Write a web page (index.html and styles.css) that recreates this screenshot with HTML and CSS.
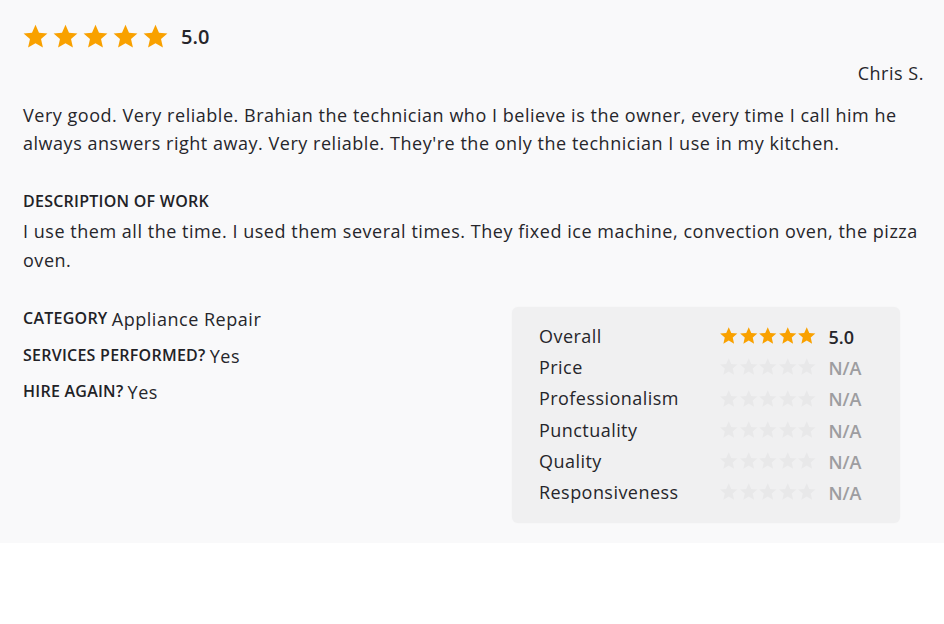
FILE: index.html
```html
<!DOCTYPE html>
<html lang="en">
<head>
<meta charset="utf-8">
<link rel="stylesheet" href="styles.css">
</head>
<body>
<svg width="0" height="0" class="defs" aria-hidden="true">
  <defs>
    <symbol id="star" viewBox="0 0 24 24">
      <path d="M12 1.6l3.1 7 7.5.7-5.7 5 1.7 7.5L12 17.9l-6.6 3.9 1.7-7.5-5.7-5 7.5-.7z"/>
    </symbol>
  </defs>
</svg>
<section class="review">
  <div class="top-rating">
    <div class="stars big">
      <svg><use href="#star"/></svg><svg><use href="#star"/></svg><svg><use href="#star"/></svg><svg><use href="#star"/></svg><svg><use href="#star"/></svg>
    </div>
    <span class="score">5.0</span>
  </div>
  <div class="author">Chris S.</div>
  <p class="text first">Very good. Very reliable. Brahian the technician who I believe is the owner, every time I call him he always answers right away. Very reliable. They're the only the technician I use in my kitchen.</p>
  <h4 class="label heading">DESCRIPTION OF WORK</h4>
  <p class="text desc">I use them all the time. I used them several times. They fixed ice machine, convection oven, the pizza oven.</p>
  <div class="details">
    <div class="facts">
      <div class="fact"><span class="label">CATEGORY</span> <span class="val">Appliance Repair</span></div>
      <div class="fact"><span class="label">SERVICES PERFORMED?</span> <span class="val">Yes</span></div>
      <div class="fact"><span class="label">HIRE AGAIN?</span> <span class="val">Yes</span></div>
    </div>
    <div class="panel">
      <div class="row"><span class="name">Overall</span><span class="stars small on"><svg><use href="#star"/></svg><svg><use href="#star"/></svg><svg><use href="#star"/></svg><svg><use href="#star"/></svg><svg><use href="#star"/></svg></span><span class="num">5.0</span></div>
      <div class="row"><span class="name">Price</span><span class="stars small off"><svg><use href="#star"/></svg><svg><use href="#star"/></svg><svg><use href="#star"/></svg><svg><use href="#star"/></svg><svg><use href="#star"/></svg></span><span class="num na">N/A</span></div>
      <div class="row"><span class="name">Professionalism</span><span class="stars small off"><svg><use href="#star"/></svg><svg><use href="#star"/></svg><svg><use href="#star"/></svg><svg><use href="#star"/></svg><svg><use href="#star"/></svg></span><span class="num na">N/A</span></div>
      <div class="row"><span class="name">Punctuality</span><span class="stars small off"><svg><use href="#star"/></svg><svg><use href="#star"/></svg><svg><use href="#star"/></svg><svg><use href="#star"/></svg><svg><use href="#star"/></svg></span><span class="num na">N/A</span></div>
      <div class="row"><span class="name">Quality</span><span class="stars small off"><svg><use href="#star"/></svg><svg><use href="#star"/></svg><svg><use href="#star"/></svg><svg><use href="#star"/></svg><svg><use href="#star"/></svg></span><span class="num na">N/A</span></div>
      <div class="row"><span class="name">Responsiveness</span><span class="stars small off"><svg><use href="#star"/></svg><svg><use href="#star"/></svg><svg><use href="#star"/></svg><svg><use href="#star"/></svg><svg><use href="#star"/></svg></span><span class="num na">N/A</span></div>
    </div>
  </div>
</section>
</body>
</html>
```
FILE: styles.css
```css
html, body { margin: 0; padding: 0; background: #ffffff; }
body { font-family: "Open Sans", "Liberation Sans", sans-serif; color: #26262b; }
.defs { position: absolute; width: 0; height: 0; overflow: hidden; }
.review { background: #f9f9fa; padding: 23px 20px 0 23px; height: 543px; box-sizing: border-box; }
.top-rating { display: flex; align-items: center; gap: 12px; height: 27px; margin-left: -1px; }
.stars { display: flex; }
.stars svg { fill: #f9a100; flex: none; }
.stars.big { gap: 3px; }
.stars.big svg { width: 27px; height: 27px; }
.score { font-size: 20px; font-weight: 600; color: #26262b; line-height: 27px; }
.author { text-align: right; font-size: 18px; line-height: 24px; margin-top: 11px; letter-spacing: 0.53px; }
.text { font-size: 18px; margin: 0; letter-spacing: 0.53px; }
.text.first { line-height: 28px; margin-top: 16px; }
.label { font-family: "Open Sans", "Liberation Sans", sans-serif; font-weight: 600; font-size: 16px; letter-spacing: 0.25px; color: #222226; }
.heading { margin: 34px 0 0; line-height: 20px; }
.text.desc { line-height: 29px; margin-top: 5.5px; }
.details { display: flex; justify-content: space-between; align-items: flex-start; margin-top: 32.5px; padding-right: 24px; }
.facts { display: flex; flex-direction: column; gap: 11.5px; }
.fact { line-height: 24px; }
.fact .label { position: relative; top: -2px; }
.val { font-size: 18px; letter-spacing: 0.53px; }
.panel { width: 388px; box-sizing: border-box; background: #f0f0f1; border-radius: 6px; padding: 13.4px 27px 15.4px; box-shadow: 0 0 2px rgba(0,0,0,0.03); }
.row { display: flex; align-items: center; height: 31.2px; }
.name { font-size: 18px; width: 180px; letter-spacing: 0.45px; line-height: 24px; }
.stars.small svg { width: 19.5px; height: 19.5px; }
.stars.off svg { fill: #e8e8e9; }
.num { margin-left: 12px; font-size: 18px; font-weight: 600; line-height: 24px; position: relative; top: 1px; }
.num.na { color: #9d9da0; }
```
